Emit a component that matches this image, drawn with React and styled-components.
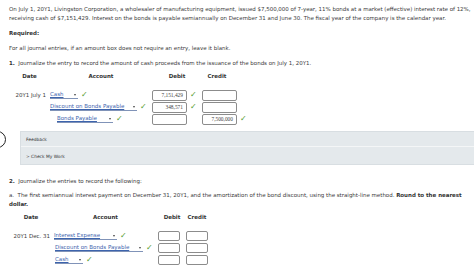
import React from 'react';
import styled, { createGlobalStyle } from 'styled-components';

const GlobalStyle = createGlobalStyle`
  body {
    margin: 0;
    background: #ffffff;
    font-family: "DejaVu Sans", Verdana, sans-serif;
    color: #3a3a3a;
  }
`;

const Page = styled.div`
  position: relative;
  width: 474px;
  height: 273px;
  overflow: hidden;
  box-sizing: border-box;
  padding: 4.5px 2px 0 9px;
  font-size: 5.48px;
  line-height: 9px;
`;

const Para = styled.p`
  margin: ${props => props.$top || 0}px 0 0 0;
  line-height: ${props => props.$lh || 9}px;
`;

const Bold = styled.b`
  font-weight: bold;
  color: #333333;
`;

const Table = styled.div`
  display: flex;
  flex-direction: column;
  margin-top: ${props => props.$top}px;
`;

const HeaderRow = styled.div`
  display: flex;
  font-weight: bold;
  color: #333333;
  height: 9px;
  margin-bottom: 8.5px;
`;

const HeadCell = styled.div`
  width: ${props => props.$w}px;
  text-align: center;
  flex-shrink: 0;
`;

const Row = styled.div`
  display: flex;
  align-items: center;
  height: 12px;
`;

const DateCell = styled.div`
  width: ${props => props.$w}px;
  flex-shrink: 0;
  text-align: right;
  padding-right: 4px;
  box-sizing: border-box;
  white-space: nowrap;
`;

const AccountCell = styled.div`
  width: ${props => props.$w}px;
  flex-shrink: 0;
  display: flex;
  align-items: center;
  padding-left: ${props => props.$indent || 0}px;
  box-sizing: border-box;
`;

const Select = styled.span`
  display: inline-flex;
  align-items: center;
  justify-content: space-between;
  width: ${props => props.$w}px;
  height: 8px;
  color: #3d64ad;
  text-decoration: underline;
  border-bottom: 1px solid #8093b8;
  box-sizing: border-box;
  white-space: nowrap;
`;

const Arrow = styled.span`
  display: inline-block;
  width: 0;
  height: 0;
  border-left: 1.5px solid transparent;
  border-right: 1.5px solid transparent;
  border-top: 2px solid #444444;
  margin-right: 2px;
`;

const Check = styled.span`
  color: #4f9a2f;
  font-size: 8px;
  width: ${props => props.$w || 15}px;
  flex-shrink: 0;
  padding-left: 3px;
  box-sizing: border-box;
  line-height: 1;
`;

const AmountBox = styled.div`
  width: ${props => props.$w}px;
  height: ${props => props.$h}px;
  flex-shrink: 0;
  border: 1px solid #8c8c8c;
  border-radius: 2px;
  box-sizing: border-box;
  background: #ffffff;
  font-family: "Liberation Serif", "Times New Roman", serif;
  font-size: 5.4px;
  color: #444444;
  text-align: right;
  padding-right: 3px;
  line-height: ${props => props.$h - 2}px;
`;

const Gap = styled.div`
  width: ${props => props.$w}px;
  flex-shrink: 0;
`;

const Panel = styled.div`
  margin: 6px -2px 0 11px;
  height: 34px;
  background: #e4e9ec;
  border: 1px solid #d8dee2;
  border-right: none;
  box-sizing: border-box;
  font-size: 4.4px;
  color: #333333;
`;

const PanelRow = styled.div`
  height: ${props => props.$h}px;
  display: flex;
  align-items: center;
  padding-left: 5px;
  border-bottom: ${props => (props.$divider ? '1px solid #f4f6f7' : 'none')};
`;

const Circle = styled.div`
  position: absolute;
  left: -11px;
  top: 131px;
  width: 15px;
  height: 15px;
  border: 1px solid #222222;
  border-radius: 50%;
`;

const first = [
  { date: '20Y1 July 1', account: 'Cash', sel: 28, indent: 0, debit: '7,151,429', credit: null, checkD: true, checkC: false },
  { date: '', account: 'Discount on Bonds Payable', sel: 89, indent: 0, debit: '348,571', credit: null, checkD: true, checkC: false },
  { date: '', account: 'Bonds Payable', sel: 56, indent: 7, debit: null, credit: '7,500,000', checkD: false, checkC: true },
];

const second = [
  { date: '20Y1 Dec. 31', account: 'Interest Expense', sel: 63, indent: 0 },
  { date: '', account: 'Discount on Bonds Payable', sel: 89, indent: 1 },
  { date: '', account: 'Cash', sel: 28, indent: 1 },
];

const App = () => {
  return (
    <Page>
      <GlobalStyle />
      <Para>
        On July 1, 20Y1, Livingston Corporation, a wholesaler of manufacturing equipment, issued $7,500,000 of 7-year, 11% bonds at a market (effective) interest rate of 12%,
        receiving cash of $7,151,429. Interest on the bonds is payable semiannually on December 31 and June 30. The fiscal year of the company is the calendar year.
      </Para>
      <Para $top={6}><Bold>Required:</Bold></Para>
      <Para $top={6}>For all journal entries, if an amount box does not require an entry, leave it blank.</Para>
      <Para $top={6}><Bold>1.</Bold>&nbsp; Journalize the entry to record the amount of cash proceeds from the issuance of the bonds on July 1, 20Y1.</Para>

      <Table $top={4}>
        <HeaderRow>
          <HeadCell $w={41}>Date</HeadCell>
          <HeadCell $w={102}>Account</HeadCell>
          <HeadCell $w={50}>Debit</HeadCell>
          <HeadCell $w={30}>Credit</HeadCell>
        </HeaderRow>
        {first.map((r, i) => (
          <Row key={i}>
            <DateCell $w={41}>{r.date}</DateCell>
            <AccountCell $w={102} $indent={r.indent}>
              <Select $w={r.sel}>{r.account}<Arrow /></Select>
              <Check>✓</Check>
            </AccountCell>
            <AmountBox $w={35} $h={11}>{r.debit}</AmountBox>
            {r.checkD ? <Check>✓</Check> : <Gap $w={15} />}
            <AmountBox $w={35} $h={11}>{r.credit}</AmountBox>
            {r.checkC && <Check>✓</Check>}
          </Row>
        ))}
      </Table>

      <Circle />
      <Panel>
        <PanelRow $h={14} $divider>Feedback</PanelRow>
        <PanelRow $h={18}>&gt; Check My Work</PanelRow>
      </Panel>

      <Para $top={11.5}><Bold>2.</Bold>&nbsp; Journalize the entries to record the following:</Para>
      <Para $top={5} $lh={9.5}>
        a.&nbsp; The first semiannual interest payment on December 31, 20Y1, and the amortization of the bond discount, using the straight-line method. <Bold>Round to the nearest dollar.</Bold>
      </Para>

      <Table $top={3}>
        <HeaderRow>
          <HeadCell $w={44}>Date</HeadCell>
          <HeadCell $w={105}>Account</HeadCell>
          <HeadCell $w={28}>Debit</HeadCell>
          <HeadCell $w={22}>Credit</HeadCell>
        </HeaderRow>
        {second.map((r, i) => (
          <Row key={i}>
            <DateCell $w={45}>{r.date}</DateCell>
            <AccountCell $w={104} $indent={r.indent}>
              <Select $w={r.sel}>{r.account}<Arrow /></Select>
              <Check>✓</Check>
            </AccountCell>
            <AmountBox $w={22} $h={10} />
            <Gap $w={6} />
            <AmountBox $w={22} $h={10} />
          </Row>
        ))}
      </Table>
    </Page>
  );
};

export default App;
